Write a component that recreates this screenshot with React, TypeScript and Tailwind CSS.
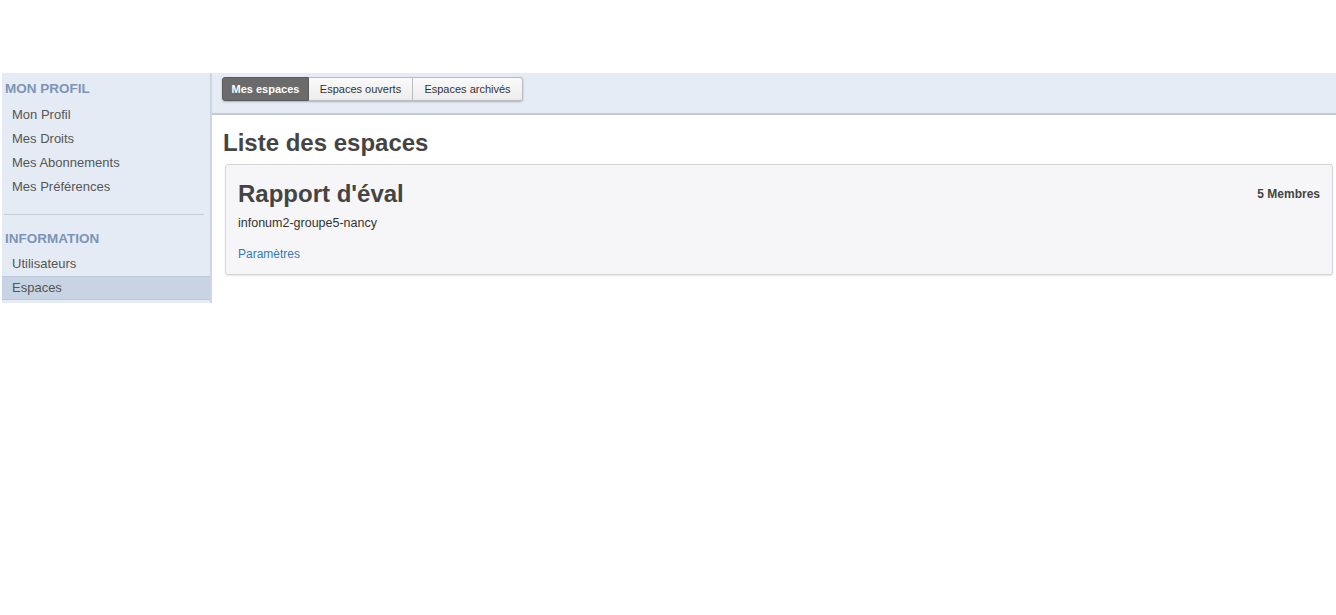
const font = { fontFamily: '"Liberation Sans", Arial, sans-serif' }

function SideItem({ label, active }: { label: string; active?: boolean }) {
  return (
    <div
      className={
        'h-6 pl-[10px] flex items-center text-[13px] text-[#555] ' +
        (active ? 'bg-[#c8d3e3] border-y border-[#bccadb]' : '')
      }
    >
      {label}
    </div>
  )
}

export default function App() {
  return (
    <div className="min-h-[615px] bg-white" style={font}>
      <div className="h-[73px]" />
      <div className="flex items-start">
        {/* Sidebar */}
        <div className="w-[212px] pl-[2px] shrink-0">
          <div className="bg-[#e5ebf4] border-r-2 border-[#cdd6e3] pb-[3px]">
            <div className="h-[30px] pl-[3px] pt-[2px] flex items-center text-[13.5px] font-bold text-[#7d94b6]">
              MON PROFIL
            </div>
            <SideItem label="Mon Profil" />
            <SideItem label="Mes Droits" />
            <SideItem label="Mes Abonnements" />
            <SideItem label="Mes Préférences" />
            <div className="h-[15px]" />
            <div className="mx-[2px] mr-[6px] border-t border-[#c3ccd9]" />
            <div className="h-[37px] pl-[3px] pt-[11px] flex items-center text-[13.5px] font-bold text-[#7d94b6]">
              INFORMATION
            </div>
            <SideItem label="Utilisateurs" />
            <SideItem label="Espaces" active />
          </div>
        </div>

        {/* Main */}
        <div className="flex-1">
          <div className="h-[42px] bg-[#e5ecf5] border-b-2 border-[#c3cad4] pl-[10px] pt-[3px]">
            <div className="inline-flex h-[24px] rounded-[3px] shadow-[0_1px_2px_rgba(0,0,0,0.25)] text-[11px]">
              <div className="w-[87px] flex items-center justify-center bg-[#6b6b6b] text-white font-bold rounded-l-[3px] border border-[#5a5a5a]">
                Mes espaces
              </div>
              <div className="w-[104px] flex items-center justify-center bg-gradient-to-b from-[#fafafa] to-[#ececec] text-[#333] border-y border-r border-[#bbb]">
                Espaces ouverts
              </div>
              <div className="w-[110px] flex items-center justify-center bg-gradient-to-b from-[#fafafa] to-[#ececec] text-[#333] border-y border-r border-[#bbb] rounded-r-[3px]">
                Espaces archivés
              </div>
            </div>
          </div>
          <div className="pl-[11px] pr-[3px]">
            <h1 className="mt-[14px] text-[24px] font-bold text-[#444] leading-[28px]">Liste des espaces</h1>
            <div className="mt-[7px] ml-[2px] h-[111px] bg-[#f6f6f8] border border-[#d6d6d8] rounded-[3px] shadow-[0_1px_2px_rgba(0,0,0,0.1)] px-3 pt-[14px] flex justify-between">
              <div>
                <div className="text-[24px] font-bold text-[#444] leading-[30px]">Rapport d'éval</div>
                <div className="mt-[5px] text-[12.5px] text-[#333]">infonum2-groupe5-nancy</div>
                <div className="mt-[12px] text-[12px] text-[#337ab7]">Paramètres</div>
              </div>
              <div className="pt-[6px] text-[12px] font-bold text-[#444]">5 Membres</div>
            </div>
          </div>
        </div>
      </div>
    </div>
  )
}
